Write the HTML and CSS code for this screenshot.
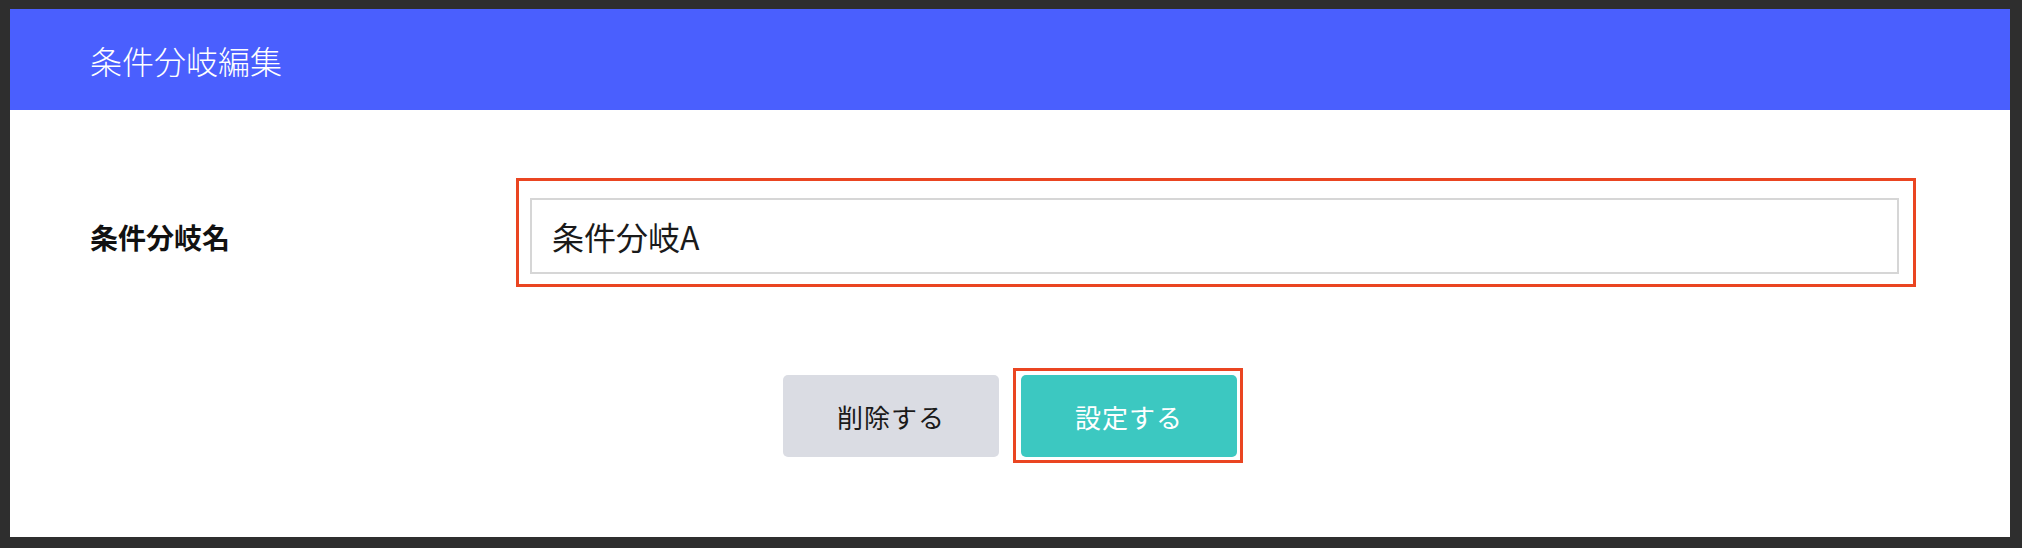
FILE: index.html
```html
<!DOCTYPE html>
<html lang="ja">
<head>
<meta charset="utf-8">
<title>条件分岐編集</title>
<link rel="stylesheet" href="styles.css">
</head>
<body>
<div class="frame">
  <header class="header">条件分岐編集</header>
  <main class="content">
    <div class="row">
      <label class="label" for="name">条件分岐名</label>
      <div class="field-mark">
        <input id="name" class="input" type="text" value="条件分岐A">
      </div>
    </div>
    <div class="actions">
      <button class="btn btn-delete" type="button">削除する</button>
      <button class="btn btn-submit" type="button">設定する</button>
    </div>
  </main>
</div>
</body>
</html>
```

FILE: styles.css
```css
html, body {
  margin: 0;
  padding: 0;
}
body {
  background: #2e2e2e;
  width: 2022px;
  height: 548px;
  overflow: hidden;
  font-family: "Noto Sans CJK JP", "Noto Sans", sans-serif;
}
.frame {
  margin: 9px 12px 0 10px;
  height: 528px;
  background: #ffffff;
}
.header {
  height: 101px;
  box-sizing: border-box;
  background: #4a5ffe;
  color: #ffffff;
  display: flex;
  align-items: center;
  padding-left: 80px;
  font-size: 32px;
  font-weight: 300;
}
.content {
  padding: 68px 94px 0 80px;
}
.row {
  display: flex;
  align-items: center;
}
.label {
  width: 426px;
  flex: none;
  font-size: 28px;
  font-weight: 700;
  color: #111111;
  padding-top: 8px;
}
.field-mark {
  flex: 1;
  border: 3px solid #ea4521;
  padding: 17px 14px 10px 11px;
}
.input {
  display: block;
  width: 100%;
  box-sizing: border-box;
  height: 76px;
  border: 2px solid #d6d6d6;
  padding: 0 20px;
  font-family: "Noto Sans CJK JP", "Noto Sans", sans-serif;
  font-size: 32px;
  color: #1a1a1a;
  background: #ffffff;
  outline: none;
}
.actions {
  display: flex;
  justify-content: center;
  gap: 22px;
  margin-top: 88px;
  margin-left: -80px;
  margin-right: -94px;
}
.btn {
  width: 216px;
  height: 82px;
  border: none;
  border-radius: 5px;
  font-family: "Noto Sans CJK JP", "Noto Sans", sans-serif;
  font-size: 26px;
  padding: 0;
  letter-spacing: 1px;
}
.btn-delete {
  background: #dadce3;
  color: #1a1a1a;
}
.btn-submit {
  position: relative;
  background: #3cc8c1;
  color: #ffffff;
}
.btn-submit::after {
  content: "";
  position: absolute;
  top: -7px;
  left: -8px;
  right: -6px;
  bottom: -6px;
  border: 3px solid #ea4521;
  pointer-events: none;
}
```
